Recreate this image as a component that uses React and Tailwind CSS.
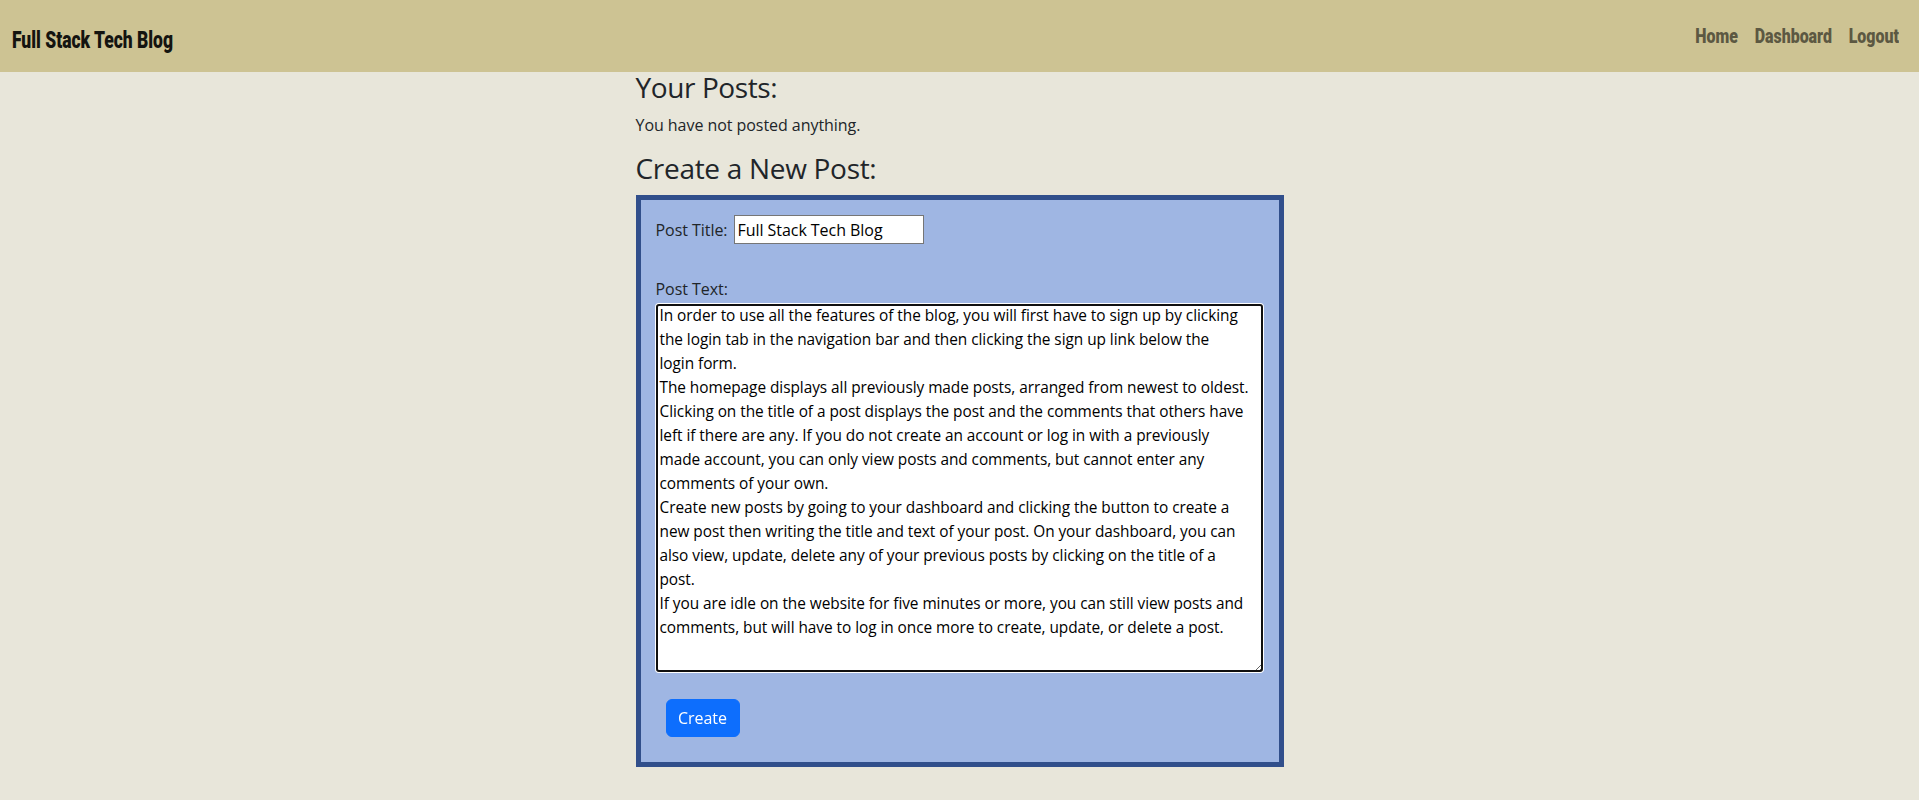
import { useEffect, useRef } from "react";

const POST_TEXT = [
  "In order to use all the features of the blog, you will first have to sign up by clicking",
  "the login tab in the navigation bar and then clicking the sign up link below the",
  "login form.",
  "The homepage displays all previously made posts, arranged from newest to oldest.",
  "Clicking on the title of a post displays the post and the comments that others have",
  "left if there are any. If you do not create an account or log in with a previously",
  "made account, you can only view posts and comments, but cannot enter any",
  "comments of your own.",
  "Create new posts by going to your dashboard and clicking the button to create a",
  "new post then writing the title and text of your post. On your dashboard, you can",
  "also view, update, delete any of your previous posts by clicking on the title of a",
  "post.",
  "If you are idle on the website for five minutes or more, you can still view posts and",
  "comments, but will have to log in once more to create, update, or delete a post.",
].join("\n");

export default function App() {
  const ref = useRef(null);
  useEffect(() => {
    const el = ref.current;
    if (el) {
      el.focus();
      const i = POST_TEXT.indexOf("the sign up") + 7;
      el.setSelectionRange(i, i);
      el.scrollTop = 0;
      el.scrollLeft = 0;
    }
  }, []);

  return (
    <div className="min-h-screen bg-[#e8e6da] font-['Open_Sans',sans-serif] tracking-[-0.05px] text-[#212529]">
      <nav className="h-[72px] bg-[#cdc393] flex items-center justify-between pl-[12px] pr-[20px]">
        <a href="#" className="block mt-[9px] font-['Roboto',sans-serif] font-black text-[23px] leading-[23px] tracking-normal text-[#141410] scale-x-[0.76] origin-left whitespace-nowrap">
          Full Stack Tech Blog
        </a>
        <div className="flex items-center gap-[22px] font-['Roboto',sans-serif] font-black text-[21px] leading-[21px] tracking-normal text-[#5c5842] scale-x-[0.76] origin-right">
          <a href="#">Home</a>
          <a href="#">Dashboard</a>
          <a href="#">Logout</a>
        </div>
      </nav>

      <main className="w-[648px] mx-auto pt-[1px]">
        <h3 className="text-[28px] leading-[28px] font-normal tracking-[-0.4px]">Your Posts:</h3>
        <p className="mt-[12px] text-[16px] leading-[24px]">You have not posted anything.</p>
        <h3 className="mt-[17px] text-[28px] leading-[28px] font-normal tracking-[-0.3px]">Create a New Post:</h3>

        <form className="mt-[13px] border-[5px] border-[#314f8b] bg-[#9fb6e3] pt-[15px] pb-[25px]">
          <div className="flex items-center pl-[15px]">
            <label className="w-[78px] whitespace-nowrap text-[16px] leading-[24px]">Post Title:</label>
            <input
              type="text"
              defaultValue="Full Stack Tech Blog"
              className="w-[190px] h-[29px] border border-[#767676] bg-white px-[3px] text-[16px] text-black"
            />
          </div>

          <label className="block mt-[33px] pl-[15px] text-[16px] leading-[24px]">Post Text:</label>
          <textarea
            ref={ref}
            wrap="off"
            defaultValue={POST_TEXT}
            className="block mt-[3px] ml-[15px] w-[607px] h-[368px] pl-[4px] pr-0 py-0 border-0 rounded-[3px] outline-2 outline-solid outline-[#101010] -outline-offset-2 focus:outline-2 focus:outline-solid focus:outline-[#101010] shadow-[0_0_0_1px_#ffffff] bg-white text-black text-[15.4px] leading-[24px] resize-y overflow-hidden whitespace-pre"
          />

          <button
            type="button"
            className="block mt-[27px] ml-[25px] w-[74px] h-[38px] rounded-[6px] border border-[#0d6efd] bg-[#0d6efd] text-white text-[16px] leading-[24px]"
          >
            Create
          </button>
        </form>
      </main>
    </div>
  );
}
